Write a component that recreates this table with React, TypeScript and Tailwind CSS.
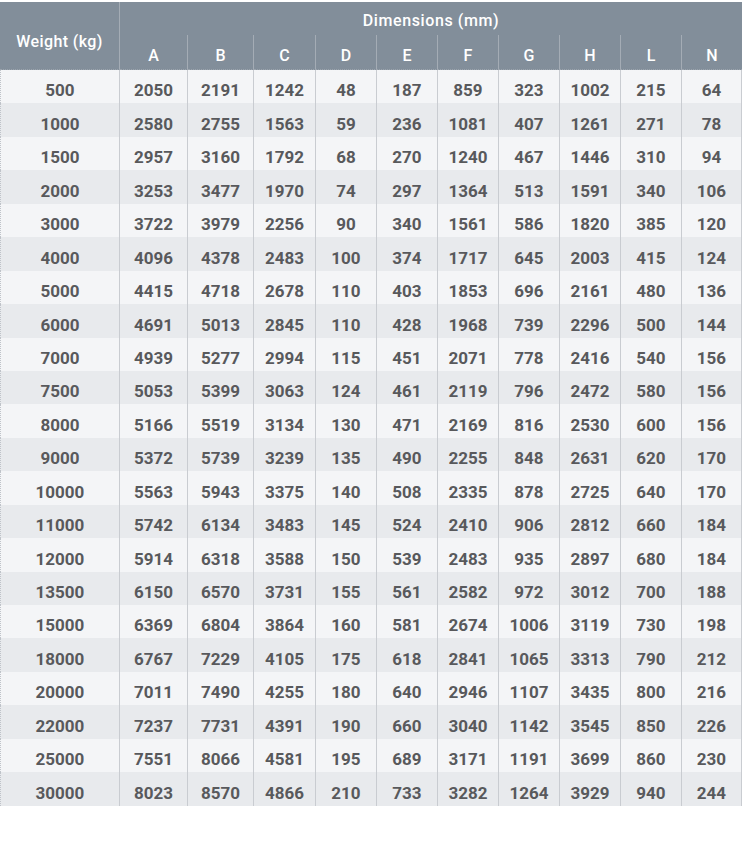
import React from "react";

const cols = ["A", "B", "C", "D", "E", "F", "G", "H", "L", "N"];
const data: number[][] = [
  [500, 2050, 2191, 1242, 48, 187, 859, 323, 1002, 215, 64],
  [1000, 2580, 2755, 1563, 59, 236, 1081, 407, 1261, 271, 78],
  [1500, 2957, 3160, 1792, 68, 270, 1240, 467, 1446, 310, 94],
  [2000, 3253, 3477, 1970, 74, 297, 1364, 513, 1591, 340, 106],
  [3000, 3722, 3979, 2256, 90, 340, 1561, 586, 1820, 385, 120],
  [4000, 4096, 4378, 2483, 100, 374, 1717, 645, 2003, 415, 124],
  [5000, 4415, 4718, 2678, 110, 403, 1853, 696, 2161, 480, 136],
  [6000, 4691, 5013, 2845, 110, 428, 1968, 739, 2296, 500, 144],
  [7000, 4939, 5277, 2994, 115, 451, 2071, 778, 2416, 540, 156],
  [7500, 5053, 5399, 3063, 124, 461, 2119, 796, 2472, 580, 156],
  [8000, 5166, 5519, 3134, 130, 471, 2169, 816, 2530, 600, 156],
  [9000, 5372, 5739, 3239, 135, 490, 2255, 848, 2631, 620, 170],
  [10000, 5563, 5943, 3375, 140, 508, 2335, 878, 2725, 640, 170],
  [11000, 5742, 6134, 3483, 145, 524, 2410, 906, 2812, 660, 184],
  [12000, 5914, 6318, 3588, 150, 539, 2483, 935, 2897, 680, 184],
  [13500, 6150, 6570, 3731, 155, 561, 2582, 972, 3012, 700, 188],
  [15000, 6369, 6804, 3864, 160, 581, 2674, 1006, 3119, 730, 198],
  [18000, 6767, 7229, 4105, 175, 618, 2841, 1065, 3313, 790, 212],
  [20000, 7011, 7490, 4255, 180, 640, 2946, 1107, 3435, 800, 216],
  [22000, 7237, 7731, 4391, 190, 660, 3040, 1142, 3545, 850, 226],
  [25000, 7551, 8066, 4581, 195, 689, 3171, 1191, 3699, 860, 230],
  [30000, 8023, 8570, 4866, 210, 733, 3282, 1264, 3929, 940, 244],
];

export default function App() {
  return (
    <div className="w-[750px] h-[858px] bg-white pt-[2px]" style={{ fontFamily: "Roboto, 'Liberation Sans', sans-serif" }}>
      <div className="w-[742px] grid grid-cols-[120px_68px_66px_62px_61px_61px_61px_61px_61px_61px_60px] grid-rows-[33px_35px_repeat(22,33.45px)]">
        <div className="row-span-2 bg-[#828e9a] border-r border-r-[#a4acb5] border-b border-b-[#9aa3ac] [border-bottom-style:dotted] flex items-center justify-center text-white text-[16px] font-medium tracking-[0.4px] pt-[12px]">
          Weight (kg)
        </div>
        <div className="col-span-10 bg-[#828e9a] flex items-center justify-center text-white text-[16px] font-medium tracking-[0.6px] pt-[4px]">
          Dimensions (mm)
        </div>
        {cols.map((c, i) => (
          <div
            key={c}
            className={`bg-[#828e9a] border-b border-b-[#9aa3ac] [border-bottom-style:dotted] flex items-center justify-center text-white text-[16px] font-medium pt-[7px] ${i < cols.length - 1 ? "border-r border-r-[#a4acb5]" : ""}`}
          >
            {c}
          </div>
        ))}
        {data.map((row, r) =>
          row.map((v, i) => (
            <div
              key={`${r}-${i}`}
              className={`${r % 2 === 0 ? "bg-[#f4f5f7]" : "bg-[#e8eaed]"} border-r border-r-[#c9ccd1] ${i === 0 ? "border-l border-l-[#bfc3c9] [border-left-style:dotted]" : ""} flex items-center justify-center text-[17px] font-bold text-[#58595c] pt-[9px]`}
            >
              {v}
            </div>
          ))
        )}
      </div>
    </div>
  );
}
